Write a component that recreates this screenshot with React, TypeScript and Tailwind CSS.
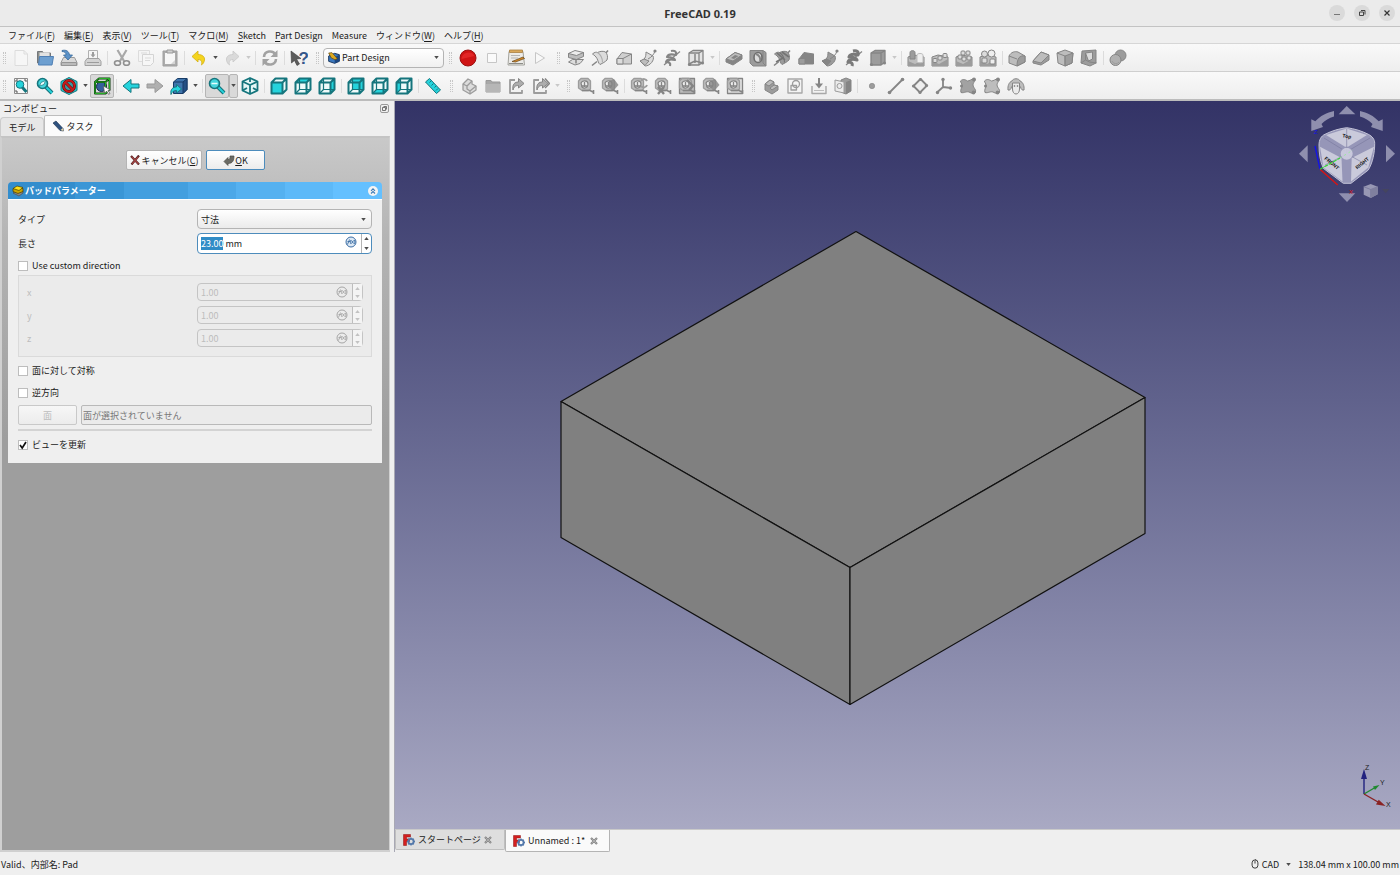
import { useEffect, useRef, useState } from "react";
import type { ReactNode } from "react";
import { Mouse } from "lucide-react";

/* ---------- icon helpers ---------- */

function Glyph({ children }: { children: ReactNode }) {
  return (
    <svg viewBox="0 0 18 18" className="h-[18px] w-[18px] shrink-0" fill="none" strokeLinejoin="round" aria-hidden="true">
      {children}
    </svg>
  );
}

function Caret({ faded = false }: { faded?: boolean }) {
  return (
    <svg viewBox="0 0 6 4" className="h-[3px] w-[5px] shrink-0" aria-hidden="true">
      <path d="M0 0h6L3 4z" fill={faded ? "#c8c8c8" : "#4d4d4d"} />
    </svg>
  );
}

const teal = "#15757d";
const cyan = "#25d3dc";
const g1 = "#858585";
const g2 = "#9c9c9c";
const g3 = "#bdbdbd";
const g4 = "#dcdcdc";

/* ---------- file tools ---------- */

const newFile = (
  <Glyph>
    <path d="M3 1.500h9l3.500 3.500v11.500H3z" fill="#f6f6f6" stroke="#dcdcdc" />
    <path d="M12 1.500V5h3.500" stroke="#dcdcdc" />
  </Glyph>
);

const openFile = (
  <Glyph>
    <path d="M1.500 14V2.500h5l1 1.500h7V14z" fill="#8c8f8c" stroke="#74777a" />
    <path d="M3.500 3.500h10v6h-10z" fill="#e2e2e2" />
    <path d="M3.500 7.500h14L16 16H2.500z" fill="#6d9fd0" stroke="#4f7fb4" />
  </Glyph>
);

const saveFile = (
  <Glyph>
    <path d="M3.500 8.500h11l2.500 5v3H1v-3z" fill="#d8d8d8" stroke="#9a9a9a" />
    <path d="M1.500 13.500h15v3h-15z" fill="#bababa" stroke="#969696" />
    <path d="M2 1.500C6 .5 9 2 9.500 6H12.500L8 11 3.500 6h2.500C6 4 5 2.500 2 2.500z" fill="#5b92c8" stroke="#37699c" strokeWidth=".8" />
  </Glyph>
);

const printFile = (
  <Glyph>
    <path d="M4.500 1.500h9v8h-9z" fill="#f5f5f5" stroke="#b0b0b0" />
    <path d="M3 9.500h12l2 3v4H1v-4z" fill="#d3d3d3" stroke="#a0a0a0" />
    <path d="M9 3v3" stroke={g2} strokeWidth="2" />
    <path d="M6.500 5.500h5L9 8.500z" fill={g2} />
    <path d="M3 13.500h12" stroke={g2} />
  </Glyph>
);

const cut = (
  <Glyph>
    <path d="M4.500 1l6.500 11M13.500 1L7 12" stroke="#a8a8a8" strokeWidth="2.200" />
    <ellipse cx="4.500" cy="14" rx="3" ry="2.300" stroke="#8f8f8f" strokeWidth="1.600" />
    <ellipse cx="13.500" cy="14" rx="3" ry="2.300" stroke="#8f8f8f" strokeWidth="1.600" />
  </Glyph>
);

const copy = (
  <Glyph>
    <path d="M1.500 1.500h11v11h-11z" fill="#f4f4f4" stroke="#dcdcdc" />
    <path d="M5.500 5.500h11v8l-3 3h-8z" fill="#f6f6f6" stroke="#d4d4d4" />
    <path d="M8 9h6M8 11.500h5M4 4h6" stroke="#dadada" />
  </Glyph>
);

const paste = (
  <Glyph>
    <path d="M2 2h14v15H2z" fill="#acacac" stroke="#a0a0a0" />
    <path d="M4 4h10v11H4z" fill="#f7f7f7" />
    <path d="M6 1h6v3H6z" fill="#d0d0d0" stroke="#999" />
    <path d="M14 11l-4 4h4z" fill="#d4d4d4" />
  </Glyph>
);

const undo = (
  <Glyph>
    <path d="M2 7.500L8 2v3.500c5 0 7 3 6.500 5.500-.3 2.300-1.500 4-3 5 .8-3 .2-5.500-3.500-5.500V13z" fill="#f4d41f" stroke="#d4b012" strokeWidth=".8" />
  </Glyph>
);

const redo = (
  <Glyph>
    <path d="M16 7.500L10 2v3.500c-5 0-7 3-6.500 5.500.3 2.300 1.500 4 3 5-.8-3-.2-5.500 3.500-5.500V13z" fill="#dadada" stroke="#c8c8c8" strokeWidth=".8" />
  </Glyph>
);

const refresh = (
  <Glyph>
    <path d="M3 8c.5-7 9-6.500 11-3M15 10c-.5 7-9 6.500-11 3" stroke="#a2a2a2" strokeWidth="2.600" />
    <path d="M16.500 1v7H9.500zM1.500 17v-7h7z" fill="#a2a2a2" />
  </Glyph>
);

const whatsThis = (
  <Glyph>
    <path d="M1 2l10 7.500-4.500.5 3 5-2.500 1.500-2.500-5L1.500 14z" fill="#5c5c5c" stroke="#3d3d3d" strokeWidth=".6" />
    <text x="8.500" y="15" fontSize="17" fontWeight="700" fontFamily="Liberation Sans" fill="#34568a">?</text>
  </Glyph>
);

/* ---------- macro tools ---------- */

const record = (
  <Glyph>
    <circle cx="9" cy="9" r="8" fill="#cf1414" stroke="#9b1010" />
    <path d="M2.500 10a7 7 0 0 1 13-3z" fill="#e22626" />
  </Glyph>
);

const stop = (
  <Glyph>
    <path d="M4.500 4.500h9v9h-9z" fill="#fafafa" stroke="#c6c6c6" />
  </Glyph>
);

const macros = (
  <Glyph>
    <path d="M2 2.500h14L17.500 16H1z" fill="#ecebe8" stroke="#a3a39d" />
    <path d="M2.500 1h13v2.500h-13z" fill="#d9a85c" stroke="#a98043" strokeWidth=".8" />
    <path d="M4 6.500h9M4 9h7" stroke="#b5b5b5" />
    <path d="M2 14.500h14" stroke="#8d8d88" />
    <path d="M5 12.500l11-4.500 1.500 1.500-9 3.500z" fill="#d58b28" stroke="#63441a" strokeWidth=".7" />
  </Glyph>
);

const play = (
  <Glyph>
    <path d="M4.500 3.500v11l9-5.500z" fill="#f8f8f8" stroke="#c6c6c6" />
  </Glyph>
);

function PartDesignIcon() {
  return (
    <svg viewBox="0 0 18 18" className="h-3 w-3 shrink-0" strokeLinejoin="round" aria-hidden="true">
      <path d="M1 6l9-4 7 2v10l-7 3-9-3z" fill="#3b78bd" stroke="#12305a" strokeWidth="1.400" />
      <path d="M10 8l7-4v10l-7 3z" fill="#1c4680" />
      <path d="M1 1.500l5-.5 8 9-3.500 1.500L5 9z" fill="#dca820" stroke="#5f450d" />
    </svg>
  );
}

/* ---------- part design features, all greyed out ---------- */

const pad = (
  <Glyph>
    <path d="M1.500 13l4-2.500h11L13 14.500 8 16z" fill={g4} stroke={g1} />
    <path d="M1.500 4.500v4l8 2 7-3v-4z" fill={g3} stroke={g1} />
    <path d="M1.500 4.500L8 1.500l8.500 2-7 3z" fill="#ececec" stroke={g1} />
    <path d="M9 10v4.500" stroke={g1} strokeWidth="1.500" />
  </Glyph>
);

function Revolution({ dark = false }: { dark?: boolean }) {
  return (
    <Glyph>
      <path d="M1 16.500l5-4M14 5l3-3.500" stroke={g1} strokeWidth="1.600" />
      <path d="M1.500 5c2-2 4-2 5-1.500 3-1.500 6-1.500 8-.5 2 2 2.500 5 1.500 8-2 2-4 3-7 4.500-1.500-1-2-4-3-6-1-2-3-3.500-4.500-4.500z" fill={dark ? g2 : g4} stroke={g1} />
      <path d="M6.500 3.500c3 2 5 6 5 10" stroke={dark ? "#747474" : "#adadad"} strokeWidth="1.200" />
      {dark && <path d="M4 4l8 7M9 3l7 5M3 13l7-4" stroke="#747474" strokeWidth="1.600" />}
    </Glyph>
  );
}

function Loft({ dark = false }: { dark?: boolean }) {
  return (
    <Glyph>
      <path d="M2 10l5-6.500 9.500 1.500v10H2z" fill={dark ? g1 : "#cfcfcf"} stroke={g1} />
      <path d="M2 9.500h6V15H2z" fill={dark ? g2 : g4} stroke={g1} />
      <path d="M8 9.500L16.500 5" stroke={g1} />
    </Glyph>
  );
}

function Pipe({ dark = false }: { dark?: boolean }) {
  return (
    <Glyph>
      <path d="M1 12c5-1 6-4 6-9l7 4c2 4-3 10-8 10z" fill={dark ? g2 : g4} stroke={g1} />
      <path d="M1 12l4-2 5 2-4 4.500z" fill={dark ? g1 : g3} stroke={g1} />
      <path d="M9 10c4-2 6-5 7-8" stroke={g1} />
      <circle cx="16" cy="2" r="1.600" fill={g1} />
    </Glyph>
  );
}

function Helix({ dark = false }: { dark?: boolean }) {
  return (
    <Glyph>
      <path d="M1 16L17 2.500" stroke={g1} strokeWidth="1.200" />
      <path d="M8 2c4-1 6 1 5 4-4-1-8-1-9 2 3 0 7 0 8 3-4-1-8-1-9 2 3 0 5 1 4 4" stroke={dark ? "#7a7a7a" : g1} strokeWidth={dark ? 3 : 2.2} />
    </Glyph>
  );
}

function Primitive({ dark = false }: { dark?: boolean }) {
  return (
    <Glyph>
      <path d="M2 4l4-2.500h10V13l-4 3H2z" fill={dark ? g2 : "#e4e4e4"} stroke={g1} strokeWidth="1.300" />
      <path d="M2 4h10v12M12 4l4-2.500" stroke={g1} strokeWidth="1.300" />
      {!dark && <path d="M8 5v9m-6 1l6-3 8 2" stroke={g1} strokeWidth="1.500" />}
      <circle cx="2.500" cy="15.500" r="1.600" fill={g1} />
      <circle cx="15.500" cy="14" r="1.600" fill={g1} />
    </Glyph>
  );
}

const pocket = (
  <Glyph>
    <path d="M1 10l9-6.500 7 2.500v4l-9 6-7-3z" fill={g1} stroke={g1} />
    <path d="M1 10l9-6.500 7 2.500-9 6z" fill={g3} stroke={g1} />
    <path d="M6 9l4-3 3.500 1-4.500 3z" fill={g1} />
  </Glyph>
);

const hole = (
  <Glyph>
    <path d="M1 1.500h13l3 2v13.500H4l-3-3z" fill={g2} stroke={g1} />
    <path d="M14 2v12l3 3" stroke={g1} />
    <ellipse cx="9" cy="8.500" rx="4" ry="5" fill={g4} stroke="#6f6f6f" strokeWidth="1.600" />
    <path d="M7 5c3 1 5 4 4 7" stroke={g1} strokeWidth="2" />
  </Glyph>
);

function Pattern({ kind }: { kind: "mirror" | "linear" | "polar" | "multi" }) {
  return (
    <Glyph>
      <path d="M1 8l6-2 10 2v9H1z" fill={g3} stroke={g1} />
      <path d="M1 12l7 3 9-5v7H1z" fill={g2} />
      {kind === "mirror" && (
        <>
          <path d="M3 3.500c0-2.500 5-2.500 5 0V10H3z" fill={g2} stroke={g1} />
          <path d="M10 6c0-2 6-2 6 0v7c0 1-6 1-6 0z" fill="#eee" stroke={g3} />
        </>
      )}
      {kind === "linear" && [3, 8, 13].map((x) => (
        <rect key={x} x={x - 1} y={11 - x / 2} width="4" height="4" rx="1" fill={g4} stroke={g1} />
      ))}
      {kind === "polar" && [[7, 3], [12, 3], [4, 7], [13, 8], [8, 9]].map(([x, y]) => (
        <rect key={`${x}-${y}`} x={x - 1} y={y - 1} width="4" height="4" rx="1" fill={g4} stroke={g1} />
      ))}
      {kind === "multi" && (
        <>
          <circle cx="5.500" cy="5" r="3" fill={g4} stroke={g1} />
          <circle cx="12.500" cy="4.500" r="3.500" fill="#eee" stroke={g1} />
          <rect x="3" y="9" width="5" height="5" rx="1" fill={g4} stroke={g1} />
          <rect x="11" y="10" width="5" height="5" rx="1" fill="#eee" stroke={g1} />
        </>
      )}
    </Glyph>
  );
}

const fillet = (
  <Glyph>
    <path d="M1 7c2-4 6-5 9-4l7 4v6l-8 4-8-3z" fill={g3} stroke={g1} />
    <path d="M17 7c-5-1-8 2-8 10l8-4z" fill={g2} stroke={g1} />
    <path d="M1 7l8 3" stroke={g1} />
  </Glyph>
);

const chamfer = (
  <Glyph>
    <path d="M1 12l8-9 8 3v5l-8 5-8-2z" fill={g2} stroke={g1} />
    <path d="M1 12l8-9 8 3-8 8z" fill={g3} stroke={g1} />
  </Glyph>
);

const draft = (
  <Glyph>
    <path d="M1 4l8-3 8 3-1 10-7 3-7-3z" fill={g3} stroke={g1} />
    <path d="M9 7l8-3-1 10-7 3z" fill={g2} stroke={g1} />
    <path d="M1 4l8 3v10" stroke={g1} />
  </Glyph>
);

const thickness = (
  <Glyph>
    <path d="M2 2l14-1v13l-6 3-9-3z" fill={g2} stroke={g1} />
    <path d="M5.500 4l7-1v7l-4 2z" fill={g4} stroke={g1} />
    <path d="M5.500 4v7l4 2 7 1M5.500 11L1 14" stroke={g1} />
  </Glyph>
);

const booleanOp = (
  <Glyph>
    <circle cx="11.500" cy="6.500" r="5.500" fill={g2} stroke={g1} />
    <circle cx="6.500" cy="11" r="5.500" fill="#b0b0b0" stroke={g1} />
    <path d="M3 12a4 4 0 0 0 7 1" stroke={g2} />
  </Glyph>
);

/* ---------- view tools ---------- */

function Lens({ small = false }: { small?: boolean }) {
  return small ? (
    <>
      <path d="M10 10l4.500 5" stroke={teal} strokeWidth="3" />
      <circle cx="8" cy="7.500" r="3.800" fill={cyan} stroke={teal} />
    </>
  ) : (
    <>
      <path d="M9 9l7 7" stroke={teal} strokeWidth="4" />
      <path d="M10 10l6 6" stroke={cyan} strokeWidth="1.800" />
      <circle cx="6.500" cy="6.500" r="5" fill="#45d6dc" stroke={teal} strokeWidth="1.600" />
    </>
  );
}

const fitAll = (
  <Glyph>
    <path d="M2.500 1.500h13v15h-13z" fill="#f8f8f8" stroke="#8a8a8a" />
    <path d="M4 5V3h2M14 5V3h-2M4 13v2h2" stroke="#555" />
    <Lens small />
  </Glyph>
);

const fitSelection = (
  <Glyph>
    <Lens />
    <path d="M3.500 9L5 5.500l4.500-2L8 7.500z" fill="#f2ffff" stroke={teal} strokeWidth=".7" />
  </Glyph>
);

const drawStyle = (
  <Glyph>
    <path d="M9 .5l8 4v9l-8 4-8-4v-9z" fill={cyan} stroke={teal} />
    <circle cx="9" cy="9" r="5.500" stroke="#5f0d0d" strokeWidth="3" fill="#3a9aa2" />
    <path d="M5 5l8 8" stroke="#5f0d0d" strokeWidth="3" />
    <circle cx="9" cy="9" r="5.500" stroke="#c81c1c" strokeWidth="1.800" />
    <path d="M5 5l8 8" stroke="#c81c1c" strokeWidth="1.800" />
  </Glyph>
);

const selectionBox = (
  <Glyph>
    <circle cx="8.500" cy="9.500" r="5" fill="#35609c" stroke="#14284a" />
    <path d="M2 5l4-3.500h10.500v11l-4 4H2zM2 5h10.500v11M12.500 5l4-3.500" stroke="#0b3b0b" strokeWidth="2" />
    <path d="M2 5l4-3.500h10.500v11l-4 4H2zM2 5h10.500v11M12.500 5l4-3.500" stroke="#27b127" />
    <path d="M10.500 9l7 4-2.500.5 2 3-1.500.8-1.700-3L11.500 16z" fill="#fff" stroke="#555" strokeWidth=".7" />
  </Glyph>
);

const arrowLeft = (
  <Glyph>
    <path d="M1 9l8-6.500V7h8v4H9v4.500z" fill={cyan} stroke={teal} />
  </Glyph>
);

const arrowRight = (
  <Glyph>
    <path d="M17 9L9 2.500V7H1v4h8v4.500z" fill="#b0b0b0" stroke="#999" />
  </Glyph>
);

const linkBox = (
  <Glyph>
    <path d="M3.500 5l4-3.500H17v11l-4 4H3.500z" fill="#3f75ad" stroke="#173b66" />
    <path d="M13 5v11.500l4-4v-11z" fill="#244f83" stroke="#173b66" />
    <path d="M3.500 5H13" stroke="#173b66" />
    <path d="M1 17.500C0 12 3 10 6.500 10V7.500l5 4.500-5 4V13.500c-3 0-4 1-5.500 4z" fill={cyan} stroke={teal} strokeWidth=".9" />
  </Glyph>
);

const zoomTool = (
  <Glyph>
    <Lens />
    <path d="M3.500 6.500h6" stroke="#e9ffff" strokeWidth="1.500" />
  </Glyph>
);

const isoView = (
  <Glyph>
    <path d="M9 1l7.500 3.500v9L9 17l-7.500-3.500v-9z" fill="#e4f6f6" stroke={teal} strokeWidth="1.800" />
    <path d="M1.500 4.500L9 8l7.500-3.500M9 8v9M9 1v4M1.500 13.500L6 11M16.500 13.500L12 11" stroke={teal} strokeWidth="1.800" />
  </Glyph>
);

const faces = {
  front: "M1.500 5.500h11v11h-11z",
  top: "M1.500 5.500l4-4h11l-4 4z",
  right: "M12.500 5.500l4-4v11l-4 4z",
  rear: "M5.500 1.500h11v11h-11z",
  bottom: "M1.500 16.500l4-4h11l-4 4z",
  left: "M1.500 5.500l4-4v11l-4 4z",
};

function ViewCube({ face }: { face: keyof typeof faces }) {
  return (
    <Glyph>
      <path d="M1.500 5.500l4-4h11v11l-4 4h-11z" fill="#eefafa" />
      <path d={faces[face]} fill={cyan} />
      {face !== "front" && <path d="M5.500 1.500v11h11M5.500 12.500l-4 4" stroke={teal} strokeWidth="1.200" />}
      <path d="M1.500 5.500l4-4h11v11l-4 4h-11zM1.500 5.500h11v11M12.500 5.500l4-4" stroke={teal} strokeWidth="2" />
    </Glyph>
  );
}

const ruler = (
  <Glyph>
    <path d="M1.500 5L5.500 1.500 16.500 13l-4 3.500z" fill={cyan} stroke={teal} />
    <path d="M7 4L5.500 5.500M9.500 6.500l-2 2M12 9l-1.500 1.500M14 11.500l-2 2" stroke={teal} />
  </Glyph>
);

const part = (
  <Glyph>
    <path d="M3 7l5-5 4 2v3l4 2v4l-6 4-7-4z" fill={g4} stroke={g2} strokeWidth="1.300" />
    <path d="M3 7l4 2 5-5M7 9v3l3 2 6-5M10 14v3" stroke={g2} strokeWidth="1.300" />
  </Glyph>
);

const group = (
  <Glyph>
    <path d="M2 15V3.500h5l1 1.500h8v10z" fill="#a8a8a8" stroke="#999" />
    <path d="M2 7h14v8H2z" fill="#b6b6b6" />
  </Glyph>
);

function LinkGlyph({ double = false }: { double?: boolean }) {
  return (
    <Glyph>
      <path d="M7 3H2v13h12v-3" stroke={g2} strokeWidth="1.800" />
      <path d="M5 13c-1-6 2-8 5.500-8V1.500l5.500 5L10.500 11V8.500c-3 0-4.500 1-5.500 4.500z" fill="#adadad" stroke={g1} />
      {double && <path d="M13 1.500l4.500 5L13 11" stroke={g1} strokeWidth="1.500" />}
    </Glyph>
  );
}

function Measure({ mark = "none" }: { mark?: "none" | "cube" | "reload" | "cross" | "box" | "frame" }) {
  return (
    <Glyph>
      {(mark === "frame" || mark === "box") && <path d="M1.500 16.500v-15h15v15z" fill={mark === "box" ? g3 : "#e2e2e2"} stroke={g1} strokeWidth="1.300" />}
      <path d="M1.500 4L4 1.500h7l2.500 2.500v8l-2 1.500H5L1.500 11z" fill={g3} stroke={g2} strokeWidth="1.300" />
      <path d="M4 6c1-3 7-3 7 1s-4 5-6 3z" fill="#ededed" stroke={g1} strokeWidth="1.200" />
      <path d="M4.500 9h6M7.500 5v5" stroke={g1} strokeWidth="1.300" />
      <path d="M5 13.500h8l4 2M16.500 13v4" stroke={g1} strokeWidth="1.600" />
      {mark === "cube" && <path d="M8 4l5-2 4.500 6-5.500 6-4.500-4z" fill={g1} opacity=".8" />}
      {mark === "reload" && <path d="M11 4c2-3 5-2 6 0M17 8c-1 3-4 3-6 1" stroke={g2} strokeWidth="2" />}
      {mark === "cross" && <path d="M4 10l6 7M10 10l-6 7" stroke={g1} strokeWidth="2.400" />}
      {mark === "box" && <path d="M9 3l6 6-4 4" stroke={g1} strokeWidth="2.400" />}
    </Glyph>
  );
}

const body = (
  <Glyph>
    <path d="M3 7l5-4 4 2v3l4 1v4l-6 4-7-4z" fill={g2} stroke={g1} />
    <path d="M3 7l5-4 4 2-5 4zM8 11l4-3 4 1-6 4z" fill={g3} stroke={g1} />
  </Glyph>
);

const sketch = (
  <Glyph>
    <path d="M2 2h14v14H2z" fill="#f4f4f4" stroke="#a8a8a8" strokeWidth="1.400" />
    <circle cx="10" cy="7" r="3.500" stroke={g2} strokeWidth="1.300" />
    <path d="M5 8.500h5.500V13H5z" stroke={g2} strokeWidth="1.300" />
  </Glyph>
);

const importSketch = (
  <Glyph>
    <path d="M2 9v7.500h14V9" fill="#f2f2f2" stroke="#a8a8a8" strokeWidth="1.400" />
    <path d="M9 1v6" stroke={g1} strokeWidth="2" />
    <path d="M5 6.500h8L9 11.500z" fill={g1} />
    <path d="M4 13.500h10" stroke={g3} />
  </Glyph>
);

const mapSketch = (
  <Glyph>
    <path d="M7 3l5-2 5 2v11l-5 3-5-2z" fill={g2} stroke={g1} />
    <path d="M12 5l5-2v11l-5 3z" fill={g1} />
    <path d="M1 3l9 2v11l-9-2z" fill="#ececec" stroke={g2} />
    <circle cx="5.500" cy="9" r="2.500" stroke={g2} />
  </Glyph>
);

const datumPoint = (
  <Glyph>
    <circle cx="9" cy="9" r="2.700" fill={g2} stroke={g1} strokeWidth=".6" />
  </Glyph>
);

const datumLine = (
  <Glyph>
    <path d="M2.500 15.500l13-13" stroke={g1} strokeWidth="1.800" />
    <circle cx="2.500" cy="15.500" r="1.800" fill={g1} />
    <circle cx="15.500" cy="2.500" r="1.800" fill={g1} />
  </Glyph>
);

const datumPlane = (
  <Glyph>
    <path d="M2.500 9L9.500 2l6.500 6.500L9 15.500z" stroke={g1} strokeWidth="1.800" fill="#eee" />
    <circle cx="2.500" cy="9" r="1.600" fill={g1} />
    <circle cx="9.500" cy="2.500" r="1.600" fill={g1} />
    <circle cx="15.500" cy="8.500" r="1.600" fill={g1} />
    <circle cx="9" cy="15.500" r="1.600" fill={g1} />
  </Glyph>
);

const datumCs = (
  <Glyph>
    <path d="M8 2v8l8 1M8 10l-6 5.500" stroke={g1} strokeWidth="1.800" />
    <circle cx="8" cy="2.500" r="1.700" fill={g1} />
    <circle cx="15.500" cy="11" r="1.700" fill={g1} />
    <circle cx="2.500" cy="15.500" r="1.700" fill={g1} />
  </Glyph>
);

function Binder({ dark = false }: { dark?: boolean }) {
  return (
    <Glyph>
      <path d="M1.500 4c2-2 4-2 7 0 2 0 4-2 7-2.500 1.500 2-1.500 4-1.500 6.500 0 3 3.500 4 2.500 7.500-2 1.500-3.500 1-5.500 0-3-2-6 1-9 0-1-3 1-4.500 1-7s-1.500-3-1.500-4.500z" fill={dark ? "#a2a2a2" : g3} stroke={g1} />
      <circle cx="2.500" cy="9" r="1.500" fill={g1} />
      <circle cx="15" cy="2.500" r="1.900" fill={g1} />
      <circle cx="14.500" cy="15.500" r="1.900" fill={g1} />
    </Glyph>
  );
}

const clone = (
  <Glyph>
    <path d="M5 4c1-3 7-3 8 0 3 1 4.500 5 4 9-1.500.5-3-.5-3.500-3L12.500 9H5.500l-1 1c-.5 2.500-2 3.500-3.500 3C.5 9 2 5 5 4z" fill={g3} stroke={g1} />
    <path d="M5.500 6h7v6c0 3-1.500 5-3.500 5s-3.500-2-3.500-5z" fill="#ebebeb" stroke={g1} />
    <circle cx="7.500" cy="9" r=".8" fill="#666" />
    <circle cx="10.500" cy="9" r=".8" fill="#666" />
  </Glyph>
);

function FreeCadLogo() {
  return (
    <svg viewBox="0 0 12 12" className="h-3 w-3 shrink-0" aria-hidden="true">
      <path d="M.5.500h7v2.500h-4v2h3v2.500h-3v4h-3z" fill="#d51f1f" stroke="#8b1010" strokeWidth=".5" />
      <circle cx="8" cy="7.500" r="2.600" fill="none" stroke="#5479ab" strokeWidth="1.800" />
      <path d="M8 3.500v1.500M8 10v1.500M4 7.500h1.500M10.500 7.500H12M5.200 4.700l1 1M9.800 9.300l1 1M10.800 4.700l-1 1M6.200 9.300l-1 1" stroke="#5479ab" strokeWidth="1.300" />
    </svg>
  );
}

function FxIcon({ disabled = false }: { disabled?: boolean }) {
  const color = disabled ? "#a6a6a6" : "#3c6ea5";
  return (
    <svg viewBox="0 0 12 12" className="h-3 w-3 shrink-0" fill="none" stroke={color} aria-hidden="true">
      <circle cx="6" cy="6" r="5" fill={disabled ? "#ececec" : "#dce8f4"} />
      <path d="M2 8.500c1.500 0 1.500-5 3-5M2.500 5.500H5M6 4c-1 1.500-.8 3 0 4M6.500 4.500l2 3M8.500 4.500l-2 3M9.200 4c1 1.500.8 3 0 4" strokeWidth=".9" />
    </svg>
  );
}

/* ---------- toolbar pieces ---------- */

function Tool({ label, icon, pressed = false, disabled = false }: { label: string; icon: ReactNode; pressed?: boolean; disabled?: boolean }) {
  return (
    <button
      type="button"
      aria-label={label}
      disabled={disabled}
      className={`flex h-6 w-6 shrink-0 items-center justify-center rounded-xs border ${
        pressed ? "border-[#b5b5b5] bg-[#d9d9d9]" : "border-transparent"
      }`}
    >
      {icon}
    </button>
  );
}

function Drop({ label, faded = false, pressed = false }: { label: string; faded?: boolean; pressed?: boolean }) {
  return (
    <button
      type="button"
      aria-label={label}
      disabled={faded}
      className={`flex h-6 w-[9px] shrink-0 items-center justify-center rounded-xs border ${
        pressed ? "border-[#b5b5b5] bg-[#d9d9d9]" : "border-transparent"
      }`}
    >
      <Caret faded={faded} />
    </button>
  );
}

function Sep() {
  return (
    <div className="flex h-[14px] w-[5px] shrink-0 justify-center">
      <div className="w-px bg-[#dcdcdc]" />
    </div>
  );
}

function Handle({ first = false }: { first?: boolean }) {
  return (
    <div className={`flex h-3 shrink-0 justify-center ${first ? "w-[9px]" : "w-3"}`}>
      <div className="w-[3px] border-x border-dotted border-[#c6c6c6]" />
    </div>
  );
}

const menus = [
  ["ファイル(", "F", ")"],
  ["編集(", "E", ")"],
  ["表示(", "V", ")"],
  ["ツール(", "T", ")"],
  ["マクロ(", "M", ")"],
  ["", "S", "ketch"],
  ["", "P", "art Design"],
  ["Measure", "", ""],
  ["ウィンドウ(", "W", ")"],
  ["ヘルプ(", "H", ")"],
];

function MenuBar() {
  return (
    <nav className="flex h-[17px] items-center gap-[9px] border-b border-[#d6d6d6] bg-[#efefef] px-2">
      {menus.map(([before, key, after]) => (
        <button key={before + key + after} type="button" className="whitespace-nowrap">
          {before}
          <span className="underline underline-offset-2">{key}</span>
          {after}
        </button>
      ))}
    </nav>
  );
}

function TitleBar() {
  return (
    <header className="grid h-[27px] grid-cols-[1fr_auto_1fr] items-center border-b border-[#c3c3c3] bg-[#ebebeb]">
      <h1 className="col-start-2 font-['Noto_Sans',sans-serif] text-[11px] font-bold text-[#333]">FreeCAD 0.19</h1>
      <div className="flex justify-end gap-[9px] pr-[5px]">
        <button type="button" aria-label="Minimize" className="flex h-4 w-4 items-center justify-center rounded-full bg-[#dadada]">
          <svg viewBox="0 0 8 8" className="h-2 w-2"><path d="M1 5.500h6" stroke="#777" /></svg>
        </button>
        <button type="button" aria-label="Restore" className="flex h-4 w-4 items-center justify-center rounded-full bg-[#dadada]">
          <svg viewBox="0 0 8 8" className="h-2 w-2" fill="none" stroke="#444"><path d="M1.500 3h4v3.500h-4zM3 1.500h4v4" /></svg>
        </button>
        <button type="button" aria-label="Close" className="flex h-4 w-4 items-center justify-center rounded-full bg-[#dadada]">
          <svg viewBox="0 0 8 8" className="h-2 w-2"><path d="M1.500 1.500l5 5M6.500 1.500l-5 5" stroke="#333" strokeWidth="1.200" /></svg>
        </button>
      </div>
    </header>
  );
}

function MainToolbar() {
  return (
    <div role="toolbar" aria-label="Modeling" className="flex h-7 items-center overflow-hidden border-b border-[#cfcfcf] bg-linear-to-b from-[#f9f9f9] to-[#eeeeee]">
      <Handle first />
      <Tool label="New" icon={newFile} />
      <Tool label="Open" icon={openFile} />
      <Tool label="Save" icon={saveFile} />
      <Tool label="Print" icon={printFile} />
      <Sep />
      <Tool label="Cut" icon={cut} disabled />
      <Tool label="Copy" icon={copy} disabled />
      <Tool label="Paste" icon={paste} disabled />
      <Sep />
      <Tool label="Undo" icon={undo} />
      <Drop label="Undo list" />
      <Tool label="Redo" icon={redo} disabled />
      <Drop label="Redo list" faded />
      <Sep />
      <Tool label="Refresh" icon={refresh} />
      <Sep />
      <Tool label="What's this?" icon={whatsThis} />
      <Handle />
      <div className="flex h-5 w-[121px] shrink-0 items-center rounded-sm border border-[#b4b4b4] bg-linear-to-b from-white to-[#f0f0f0] px-1">
        <PartDesignIcon />
        <select aria-label="Workbench" className="min-w-0 flex-1 appearance-none pl-[2px] outline-none">
          <option>Part Design</option>
        </select>
        <Caret />
      </div>
      <Handle />
      <Tool label="Record macro" icon={record} />
      <Tool label="Stop recording" icon={stop} disabled />
      <Tool label="Macros" icon={macros} />
      <Tool label="Run macro" icon={play} disabled />
      <Handle />
      <Tool label="Pad" icon={pad} disabled />
      <Tool label="Revolution" icon={<Revolution />} disabled />
      <Tool label="Additive loft" icon={<Loft />} disabled />
      <Tool label="Additive pipe" icon={<Pipe />} disabled />
      <Tool label="Additive helix" icon={<Helix />} disabled />
      <Tool label="Additive primitive" icon={<Primitive />} disabled />
      <Drop label="Additive primitives" faded />
      <Sep />
      <Tool label="Pocket" icon={pocket} disabled />
      <Tool label="Hole" icon={hole} disabled />
      <Tool label="Groove" icon={<Revolution dark />} disabled />
      <Tool label="Subtractive loft" icon={<Loft dark />} disabled />
      <Tool label="Subtractive pipe" icon={<Pipe dark />} disabled />
      <Tool label="Subtractive helix" icon={<Helix dark />} disabled />
      <Tool label="Subtractive primitive" icon={<Primitive dark />} disabled />
      <Drop label="Subtractive primitives" faded />
      <Sep />
      <Tool label="Mirrored" icon={<Pattern kind="mirror" />} disabled />
      <Tool label="Linear pattern" icon={<Pattern kind="linear" />} disabled />
      <Tool label="Polar pattern" icon={<Pattern kind="polar" />} disabled />
      <Tool label="MultiTransform" icon={<Pattern kind="multi" />} disabled />
      <Sep />
      <Tool label="Fillet" icon={fillet} disabled />
      <Tool label="Chamfer" icon={chamfer} disabled />
      <Tool label="Draft" icon={draft} disabled />
      <Tool label="Thickness" icon={thickness} disabled />
      <Sep />
      <Tool label="Boolean" icon={booleanOp} disabled />
    </div>
  );
}

function ViewToolbar() {
  return (
    <div role="toolbar" aria-label="View" className="flex h-[29px] items-center overflow-hidden border-b-2 border-[#bcbcbc] bg-linear-to-b from-[#f9f9f9] to-[#eeeeee]">
      <Handle first />
      <Tool label="Fit all" icon={fitAll} />
      <Tool label="Fit selection" icon={fitSelection} />
      <Tool label="Draw style" icon={drawStyle} />
      <Drop label="Draw styles" />
      <Tool label="Bounding box" icon={selectionBox} pressed />
      <Sep />
      <Tool label="Back" icon={arrowLeft} />
      <Tool label="Forward" icon={arrowRight} disabled />
      <Tool label="Go to linked object" icon={linkBox} />
      <Drop label="Link actions" />
      <Sep />
      <Tool label="Zoom" icon={zoomTool} pressed />
      <Drop label="Zoom options" pressed />
      <Tool label="Isometric" icon={isoView} />
      <Sep />
      <Tool label="Front" icon={<ViewCube face="front" />} />
      <Tool label="Top" icon={<ViewCube face="top" />} />
      <Tool label="Right" icon={<ViewCube face="right" />} />
      <Sep />
      <Tool label="Rear" icon={<ViewCube face="rear" />} />
      <Tool label="Bottom" icon={<ViewCube face="bottom" />} />
      <Tool label="Left" icon={<ViewCube face="left" />} />
      <Sep />
      <Tool label="Measure distance" icon={ruler} />
      <Handle />
      <Tool label="Create part" icon={part} disabled />
      <Tool label="Create group" icon={group} disabled />
      <Tool label="Make link" icon={<LinkGlyph />} disabled />
      <Tool label="Make sub-link" icon={<LinkGlyph double />} disabled />
      <Drop label="More links" faded />
      <Handle />
      <Tool label="Measure linear" icon={<Measure />} disabled />
      <Tool label="Measure angular" icon={<Measure mark="cube" />} disabled />
      <Sep />
      <Tool label="Refresh measurements" icon={<Measure mark="reload" />} disabled />
      <Tool label="Clear measurements" icon={<Measure mark="cross" />} disabled />
      <Tool label="Toggle all" icon={<Measure mark="box" />} disabled />
      <Tool label="Toggle 3D" icon={<Measure mark="cube" />} disabled />
      <Tool label="Toggle delta" icon={<Measure mark="frame" />} disabled />
      <Handle />
      <Tool label="Create body" icon={body} disabled />
      <Tool label="Create sketch" icon={sketch} disabled />
      <Tool label="Edit sketch" icon={importSketch} disabled />
      <Tool label="Map sketch" icon={mapSketch} disabled />
      <Sep />
      <Tool label="Datum point" icon={datumPoint} disabled />
      <Tool label="Datum line" icon={datumLine} disabled />
      <Tool label="Datum plane" icon={datumPlane} disabled />
      <Tool label="Local coordinate system" icon={datumCs} disabled />
      <Tool label="Shape binder" icon={<Binder dark />} disabled />
      <Tool label="Sub-shape binder" icon={<Binder />} disabled />
      <Tool label="Clone" icon={clone} disabled />
    </div>
  );
}

/* ---------- task panel ---------- */

function CheckField({ label, checked, onChange }: { label: string; checked: boolean; onChange: (value: boolean) => void }) {
  return (
    <label className="flex h-3 items-center gap-1 leading-3">
      <span className="grid h-[10px] w-[10px]">
        <input
          type="checkbox"
          checked={checked}
          onChange={(e) => onChange(e.target.checked)}
          className="col-start-1 row-start-1 h-[10px] w-[10px] appearance-none border border-[#bdbdbd] bg-white"
        />
        {checked && (
          <svg viewBox="0 0 10 10" className="pointer-events-none col-start-1 row-start-1 h-[10px] w-[10px]" fill="none" aria-hidden="true">
            <path d="M2 5l2.200 3L8 2" stroke="#111" strokeWidth="1.700" />
          </svg>
        )}
      </span>
      {label}
    </label>
  );
}

function Spinner({ disabled = false }: { disabled?: boolean }) {
  const color = disabled ? "#c2c2c2" : "#4d4d4d";
  return (
    <span className={`flex w-[10px] shrink-0 flex-col border-l ${disabled ? "border-[#bdbdbd] bg-[#f4f4f4]" : "border-[#b4b4b4]"}`}>
      <button type="button" aria-label="Increase" disabled={disabled} className="flex flex-1 items-center justify-center">
        <svg viewBox="0 0 6 4" className="h-[3px] w-[5px]"><path d="M0 4h6L3 0z" fill={color} /></svg>
      </button>
      <button type="button" aria-label="Decrease" disabled={disabled} className="flex flex-1 items-center justify-center">
        <svg viewBox="0 0 6 4" className="h-[3px] w-[5px]"><path d="M0 0h6L3 4z" fill={color} /></svg>
      </button>
    </span>
  );
}

function PadParameters() {
  const lengthRef = useRef<HTMLInputElement>(null);
  const [length, setLength] = useState("23.00 mm");
  const [customDirection, setCustomDirection] = useState(false);
  const [symmetric, setSymmetric] = useState(false);
  const [reversed, setReversed] = useState(false);
  const [updateView, setUpdateView] = useState(true);

  // the number is preselected so it can be typed over, the unit is kept
  useEffect(() => {
    lengthRef.current?.focus();
    lengthRef.current?.setSelectionRange(0, 5);
  }, []);

  return (
    <section className="mt-3 mr-[7px] ml-[6px]">
      <div className="flex h-[17px] items-center gap-px rounded-t-sm bg-[linear-gradient(90deg,#338dcd_0_18%,#3a96d6_18%_31%,#439fdf_31%_48%,#4ca8e8_48%_61%,#55b1f0_61%_74%,#5db9f8_74%_87%,#64c0ff_87%)] px-1">
        <svg viewBox="0 0 12 12" className="h-3 w-3 shrink-0" aria-hidden="true">
          <path d="M1 8l3-2h7v2l-4 3z" fill="#888" stroke="#444" strokeWidth=".6" />
          <path d="M1 3.500v3l5 2 5-2v-3z" fill="#c9a400" stroke="#4a3d00" strokeWidth=".7" />
          <path d="M1 3.500L5 1l6 1.500-4 3z" fill="#ffe11a" stroke="#4a3d00" strokeWidth=".7" />
        </svg>
        <h2 className="flex-1 font-bold text-white">パッドパラメーター</h2>
        <button type="button" aria-label="Collapse" className="h-[10px] w-[10px] rounded-full bg-[#f4f4f4]">
          <svg viewBox="0 0 10 10" className="h-[10px] w-[10px]" fill="none" stroke="#3b7cb8" strokeWidth="1.100">
            <path d="M3 4.800l2-2 2 2M3 7.500l2-2 2 2" />
          </svg>
        </button>
      </div>

      <div className="border-t border-white bg-[#efefef] px-[10px] pt-[9px] pb-3">
        <div className="grid grid-cols-2 items-center gap-x-1 gap-y-[4px]">
          <label htmlFor="pad-type">タイプ</label>
          <div className="flex h-5 items-center rounded-sm border border-[#b4b4b4] bg-linear-to-b from-white to-[#ebebeb] pr-[5px]">
            <select id="pad-type" className="min-w-0 flex-1 appearance-none pl-[3px] outline-none">
              <option>寸法</option>
            </select>
            <Caret />
          </div>

          <label htmlFor="pad-length">長さ</label>
          <div className="flex h-[21px] rounded-sm border border-[#4d8cbc] bg-white">
            <input
              id="pad-length"
              ref={lengthRef}
              value={length}
              onChange={(e) => setLength(e.target.value)}
              className="min-w-0 flex-1 pl-[3px] outline-none selection:bg-[#308cc6] selection:text-white"
            />
            <span className="mr-1 pt-[2px]"><FxIcon /></span>
            <Spinner />
          </div>
        </div>

        <div className="mt-[6px]">
          <CheckField label="Use custom direction" checked={customDirection} onChange={setCustomDirection} />
        </div>

        <fieldset disabled={!customDirection} className="mt-[3px] grid gap-[5px] border border-[#dadada] bg-[#ebebeb] px-2 pt-[7px] pb-[9px] text-[#bdbdbd]">
          {["x", "y", "z"].map((axis) => (
            <div key={axis} className="grid grid-cols-2 items-center gap-x-1">
              <label htmlFor={`dir-${axis}`}>{axis}</label>
              <div className="flex h-[18px] rounded-sm border border-[#c4c4c4]">
                <input id={`dir-${axis}`} defaultValue="1.00" className="min-w-0 flex-1 pl-[3px] outline-none" />
                <span className="mr-1 pt-[2px]"><FxIcon disabled /></span>
                <Spinner disabled />
              </div>
            </div>
          ))}
        </fieldset>

        <div className="mt-[8px] grid gap-[10px]">
          <CheckField label="面に対して対称" checked={symmetric} onChange={setSymmetric} />
          <CheckField label="逆方向" checked={reversed} onChange={setReversed} />
        </div>

        <div className="mt-[6px] flex gap-1">
          <button type="button" disabled className="h-5 w-[59px] rounded-xs border border-[#c9c9c9] bg-linear-to-b from-[#f7f7f7] to-[#ececec] text-[#bdbdbd]">
            面
          </button>
          <input
            readOnly
            aria-label="面"
            value="面が選択されていません"
            className="h-5 min-w-0 flex-1 rounded-xs border border-[#b9b9b9] bg-[#ebebeb] pl-px text-[#777] outline-none"
          />
        </div>
        <hr className="mt-1 border-t-2 border-[#d3d3d3]" />
        <div className="mt-2">
          <CheckField label="ビューを更新" checked={updateView} onChange={setUpdateView} />
        </div>
      </div>
    </section>
  );
}

function ComboView() {
  return (
    <aside className="flex w-[390px] shrink-0 flex-col bg-[#efefef]">
      <div className="flex h-[14px] items-center justify-between pr-px pl-[3px]">
        <span>コンボビュー</span>
        <button type="button" aria-label="Float panel" className="flex h-[9px] w-[9px] items-center justify-center rounded-xs border border-[#9a9a9a]">
          <svg viewBox="0 0 7 7" className="h-[7px] w-[7px]" fill="none" stroke="#555"><path d="M1.500 2.500h3v3h-3zM2.500 1.500h3v3" strokeWidth=".8" /></svg>
        </button>
      </div>
      <div role="tablist" className="flex h-[21px] items-end">
        <button type="button" role="tab" aria-selected="false" className="h-[19px] w-[44px] rounded-t-sm border border-b-0 border-[#cccccc] bg-[#e7e7e7]">
          モデル
        </button>
        <button type="button" role="tab" aria-selected="true" className="flex h-[21px] w-[58px] items-center justify-center gap-[2px] rounded-t-xs border border-b-0 border-[#bdbdbd] bg-[#fbfbfb]">
          <svg viewBox="0 0 12 12" className="h-3 w-3 shrink-0" aria-hidden="true">
            <path d="M1 3l3-2 7 7.500.5 2.500-3.500-.5z" fill="#2f527f" stroke="#182d4a" strokeWidth=".6" />
            <path d="M8.500 10l2.500-2 .5 3z" fill="#e5d6a8" />
          </svg>
          タスク
        </button>
      </div>
      <div className="flex-1 border-2 border-r border-[#d0d0d0] border-t-[#c4c4c4] bg-[linear-gradient(#c9c9c9,#b4b4b4_100px,#9e9e9e_300px)]">
        <div className="mt-[12px] flex justify-center gap-1">
          <button type="button" className="flex h-5 w-[76px] items-center justify-center gap-[2px] rounded-xs border border-[#b4b4b4] bg-linear-to-b from-white to-[#f0f0f0]">
            <svg viewBox="0 0 10 10" className="h-[10px] w-[10px] shrink-0" aria-hidden="true">
              <path d="M1 1l8 8.500M9 .5L1.500 9.500" stroke="#4d1c1c" strokeWidth="2.200" />
              <path d="M1.500 1.500l7 7.500M8.500 1.500L2 9" stroke="#a14444" strokeWidth="1.200" />
            </svg>
            <span className="whitespace-nowrap">キャンセル(<u>C</u>)</span>
          </button>
          <button type="button" className="flex h-5 w-[59px] items-center justify-center rounded-xs border border-[#4d8cbc] bg-linear-to-b from-white to-[#ececec]">
            <svg viewBox="0 0 12 11" className="h-[11px] w-3 shrink-0" aria-hidden="true">
              <path d="M1 6.500l4-4v2c2 0 2-1.500 2-3.500h4c0 4-1 7.500-6 7.500v2z" fill="#6a6a64" stroke="#4a4a45" strokeWidth=".7" />
            </svg>
            <span><u>O</u>K</span>
          </button>
        </div>
        <PadParameters />
      </div>
    </aside>
  );
}

/* ---------- 3D view ---------- */

function NavigationCube() {
  return (
    <svg viewBox="0 0 104 104" className="absolute top-0 right-0 h-[104px] w-[104px]" aria-label="Navigation cube">
      <g fill="#8f8fae">
        <path d="M50.700 5l8.600 8.300H42.700z" />
        <path d="M3 52.700l8.700-8.400v17z" />
        <path d="M99 52.700L90 44v17.300z" />
        <path d="M51 101l-8.300-8.700h16.600z" />
        <path d="M38 10v5.500c-5 1.500-9 4-12.500 7.500l1.500 3-11.700 4V18.300l4 2C24 15 31 11.500 38 10z" />
        <path d="M64 10v5.500c5 1.500 9 4 12.500 7.500L75 26l11.700 4V18.300l-4 2C78 15 71 11.500 64 10z" />
      </g>
      <path d="M50.700 26.700c8 1 15 3.300 21.600 6.600 4 2 6.400 5 6.400 9 0 10-2 19-6.400 26.700L55 82.300h-7.700L27.300 67.300C24 60 23 52 23 44c0-5 2-9 6-10.700 7-3.600 14-5.600 21.700-6.600z" fill="#9696b8" stroke="#c4c4d8" strokeWidth="1" />
      <path d="M50.700 27.500L71 34 52 45.700h-3L30 34z" fill="#cacadb" />
      <path d="M24 45.700L45.500 57l1 23.500-19-14z" fill="#cacadb" />
      <path d="M78 45.700L55.700 57 55 80.500l17.300-14z" fill="#cacadb" />
      <path d="M50.700 28v24M53 54l18 10M49 54l-20 10M52 50l22-13M49 50L28 37" stroke="#77779c" strokeWidth=".6" fill="none" />
      <circle cx="50.700" cy="52.700" r="6" fill="#d6d6e6" opacity=".8" />
      <g fontFamily="Liberation Sans" fontWeight="700" fontSize="5" fill="#111" textAnchor="middle">
        <text x="51" y="37" transform="rotate(8 51 35)">Top</text>
        <text x="36" y="64" transform="rotate(40 36 62)">FRONT</text>
        <text x="66" y="64" transform="rotate(-40 66 62)">RIGHT</text>
      </g>
      <path d="M19 45l5 23.300" stroke="#1414e6" strokeWidth="1.400" />
      <path d="M24 68.300l17.700 15.700" stroke="#d81414" strokeWidth="1.400" />
      <path d="M24 68.300L44 57" stroke="#35d735" strokeWidth="1.200" strokeDasharray="4 1" />
      <path d="M44 57l13-8" stroke="#8cf08c" strokeWidth=".8" strokeDasharray="2 3" />
      <g fontFamily="Liberation Sans" fontSize="6">
        <text x="18" y="33" fill="#1414e6">Z</text>
        <text x="53" y="93" fill="#e01414">X</text>
      </g>
      <path d="M74.700 83l7 2.700v7.600l-7 3.700-7-3.300v-8z" fill="#9898b4" />
      <path d="M67.700 85.700l7 2.800 7-2.800M74.700 88.500V97" stroke="#75759a" strokeWidth=".8" fill="none" />
      <path d="M74.700 88.500l7-2.800v7.600l-7 3.700z" fill="#7f7f9e" />
      <path d="M86 88h7.300l-3.600 4.300z" fill="#45455f" />
    </svg>
  );
}

function AxisCross() {
  return (
    <svg viewBox="0 0 40 52" className="absolute right-0 bottom-4 h-[52px] w-10" aria-label="Axis cross">
      <path d="M4 33V12" stroke="#22227f" strokeWidth="1.400" />
      <path d="M4 8l3 10H1z" fill="#22227f" />
      <path d="M4 33l12-7" stroke="#1f8a2f" strokeWidth="1.400" />
      <path d="M19.500 24l-4.500 5-2-3.500z" fill="#1f8a2f" />
      <path d="M4 33l14 8" stroke="#8a2323" strokeWidth="1.400" />
      <path d="M25.500 45l-9.500-1.500 2.700-4.700z" fill="#8a2323" />
      <g fontFamily="Liberation Sans" fontSize="7" fill="#222">
        <text x="5" y="9">Z</text>
        <text x="20" y="24">Y</text>
        <text x="26" y="46">X</text>
      </g>
    </svg>
  );
}

function Viewport() {
  return (
    <div className="relative min-h-[400px] flex-1 overflow-hidden bg-linear-to-b from-[#333366] to-[#a9a9c3]">
      <svg viewBox="0 0 1005 727" className="absolute inset-0 h-full w-full" aria-label="Pad preview">
        <g fill="#808080" stroke="#111" strokeWidth="1.200" strokeLinejoin="round">
          <path d="M461 130l289 166-295 170-289-166z" />
          <path d="M166 300l289 166v137L166 436z" />
          <path d="M750 296L455 466v137l295-171z" />
        </g>
      </svg>
      <NavigationCube />
      <AxisCross />
    </div>
  );
}

function CloseMark() {
  return (
    <svg viewBox="0 0 8 8" className="h-2 w-2 shrink-0" aria-hidden="true">
      <path d="M1 1l6 6M7 1L1 7" stroke="#858585" strokeWidth="2.200" />
      <path d="M1.500 1.500l5 5M6.500 1.500l-5 5" stroke="#b5b5b5" strokeWidth=".8" />
    </svg>
  );
}

function DocumentTabs() {
  return (
    <div role="tablist" className="flex h-[23px] items-start border-t border-[#c9c9c9] bg-[#efefef]">
      <div className="flex h-5 w-[110px] items-center justify-between rounded-b-xs border border-t-0 border-[#bfbfbf] bg-[#dedede] pr-3 pl-[7px]">
        <button type="button" role="tab" aria-selected="false" className="flex items-center gap-[3px] whitespace-nowrap">
          <FreeCadLogo />
          スタートページ
        </button>
        <button type="button" aria-label="Close start page"><CloseMark /></button>
      </div>
      <div className="flex h-[22px] w-[105px] items-center justify-between rounded-b-xs border border-t-0 border-[#b4b4b4] bg-[#fafafa] pr-[11px] pl-[7px]">
        <button type="button" role="tab" aria-selected="true" className="flex items-center gap-[3px] whitespace-nowrap">
          <FreeCadLogo />
          Unnamed : 1*
        </button>
        <button type="button" aria-label="Close document"><CloseMark /></button>
      </div>
    </div>
  );
}

export default function App() {
  return (
    <div lang="ja" className="flex min-h-screen flex-col bg-[#efefef] font-['Noto_Sans_CJK_JP',sans-serif] text-[9px] leading-[13px] text-[#1a1a1a]">
      <TitleBar />
      <MenuBar />
      <MainToolbar />
      <ViewToolbar />
      <main className="flex flex-1">
        <ComboView />
        <div className="w-1 shrink-0 bg-[#efefef]" />
        <div className="flex min-w-0 flex-1 flex-col border-l border-[#a8a8b4]">
          <Viewport />
          <DocumentTabs />
        </div>
      </main>
      <footer className="flex h-[23px] items-center justify-between px-px pt-px">
        <span>Valid、内部名: Pad</span>
        <div className="flex items-center">
          <Mouse className="mr-[2px] h-[10px] w-[10px]" />
          <button type="button" className="flex items-center gap-[7px]">
            CAD
            <Caret />
          </button>
          <span className="ml-[7px]">138.04 mm x 100.00 mm</span>
        </div>
      </footer>
    </div>
  );
}
